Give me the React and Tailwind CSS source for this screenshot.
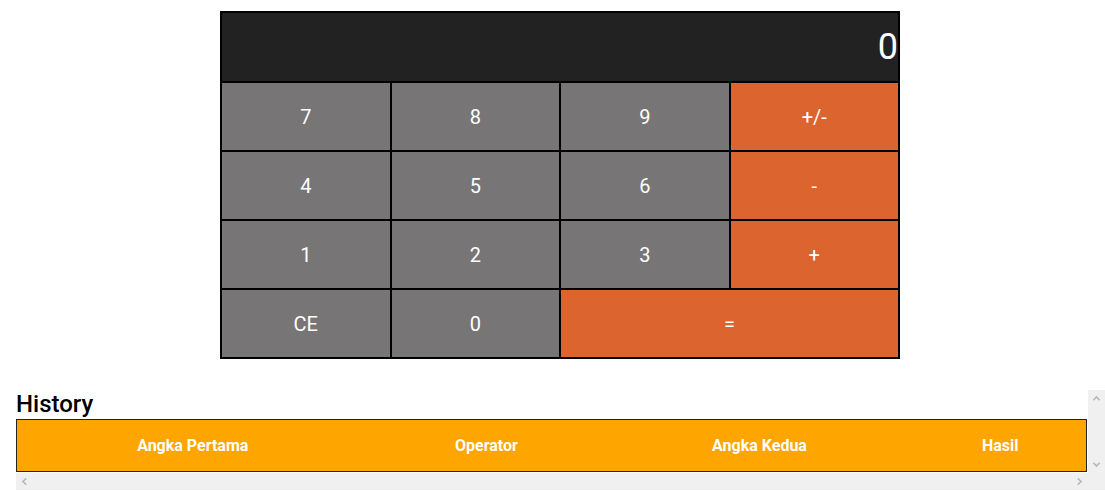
import React from "react";

const rows = [
  [
    { t: "7" },
    { t: "8" },
    { t: "9" },
    { t: "+/-", o: true },
  ],
  [
    { t: "4" },
    { t: "5" },
    { t: "6" },
    { t: "-", o: true },
  ],
  [
    { t: "1" },
    { t: "2" },
    { t: "3" },
    { t: "+", o: true },
  ],
  [
    { t: "CE" },
    { t: "0" },
    { t: "=", o: true, span: true },
  ],
];

function Chevron({ rot }) {
  return (
    <svg width="9" height="9" viewBox="0 0 10 10" style={{ transform: `rotate(${rot}deg)` }}>
      <path d="M1.5 7 L5 3.2 L8.5 7" fill="none" stroke="#b8b8b8" strokeWidth="1.8" />
    </svg>
  );
}

export default function App() {
  return (
    <div className="bg-white w-[1105px] h-[492px] overflow-hidden font-['Roboto',sans-serif]">
      <div className="ml-[220px] mt-[11px] w-[680px] border border-black">
        <div className="h-[70px] border border-black bg-[#222222] flex items-center justify-end text-white text-[36px] leading-none">
          0
        </div>
        <div className="grid grid-cols-4">
          {rows.flat().map((b, i) => (
            <button
              key={i}
              className={
                "h-[69px] border border-black flex items-center justify-center text-white text-[20px] " +
                (b.o ? "bg-[#dc642f] " : "bg-[#777575] ") +
                (b.span ? "col-span-2" : "")
              }
            >
              {b.t}
            </button>
          ))}
        </div>
      </div>

      <div className="ml-4 mt-[31px] w-[1089px] h-[100px] flex flex-col overflow-hidden">
        <div className="flex flex-1 min-h-0">
          <div className="flex-1 min-w-0">
            <h2 className="h-[29px] text-[24px] leading-[29px] font-medium text-black">History</h2>
            <table className="w-[1071px] border border-[#222222] border-collapse">
              <thead>
                <tr className="bg-[#ffa500] text-white text-[16px] font-bold h-[52px]">
                  <th className="w-[352px] font-bold">Angka Pertama</th>
                  <th className="w-[236px] font-bold">Operator</th>
                  <th className="w-[310px] font-bold">Angka Kedua</th>
                  <th className="font-bold">Hasil</th>
                </tr>
              </thead>
            </table>
          </div>
          <div className="w-[17px] bg-[#f0f0f0] flex flex-col items-center justify-between py-[4px]">
            <Chevron rot={0} />
            <Chevron rot={180} />
          </div>
        </div>
        <div className="flex h-[17px]">
          <div className="flex-1 bg-[#f0f0f0] flex items-center justify-between px-[4px]">
            <Chevron rot={270} />
            <Chevron rot={90} />
          </div>
          <div className="w-[17px] bg-[#f0f0f0]" />
        </div>
      </div>
    </div>
  );
}
